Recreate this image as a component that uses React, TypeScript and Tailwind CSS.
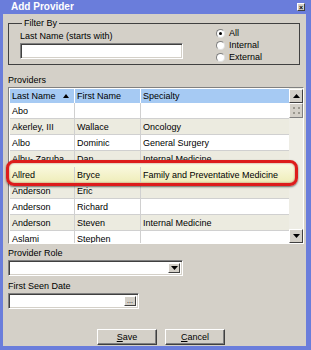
import React from "react";

type Row = { last: string; first: string; spec: string; hi?: boolean };

const rows: Row[] = [
  { last: "Abo", first: "", spec: "" },
  { last: "Akerley, III", first: "Wallace", spec: "Oncology" },
  { last: "Albo", first: "Dominic", spec: "General Surgery" },
  { last: "Albu- Zaruba", first: "Dan", spec: "Internal Medicine" },
  { last: "Allred", first: "Bryce", spec: "Family and Preventative Medicine", hi: true },
  { last: "Anderson", first: "Eric", spec: "" },
  { last: "Anderson", first: "Richard", spec: "" },
  { last: "Anderson", first: "Steven", spec: "Internal Medicine" },
  { last: "Aslami", first: "Stephen", spec: "" },
];

const Radio = ({ label, checked }: { label: string; checked?: boolean }) => (
  <div className="flex items-center h-[12px] gap-[4px]">
    <span className="w-[9px] h-[9px] rounded-full bg-white border border-t-[#808080] border-l-[#808080] border-b-[#e0e0e0] border-r-[#e0e0e0] flex items-center justify-center">
      {checked && <span className="w-[3px] h-[3px] rounded-full bg-black" />}
    </span>
    <span>{label}</span>
  </div>
);

const Sunken = ({ className, children }: { className: string; children?: React.ReactNode }) => (
  <div
    className={
      "bg-white border border-t-[#808080] border-l-[#808080] border-b-white border-r-white shadow-[inset_1px_1px_0_#404040,inset_-1px_-1px_0_#d4d0c8] flex justify-end items-stretch p-[2px] " +
      className
    }
  >
    {children}
  </div>
);

const SmallBtn = ({ children }: { children?: React.ReactNode }) => (
  <div className="w-[12px] bg-[#d4d0c8] border border-t-white border-l-white border-b-[#404040] border-r-[#404040] flex items-center justify-center">
    {children}
  </div>
);

const Button = ({ first, rest }: { first: string; rest: string }) => (
  <div className="w-[60px] h-[16px] bg-[#d4d0c8] border border-t-white border-l-white border-b-[#404040] border-r-[#404040] shadow-[inset_-1px_-1px_0_#808080] flex items-center justify-center">
    <span>
      <span className="underline">{first}</span>
      {rest}
    </span>
  </div>
);

export default function App() {
  return (
    <div className="w-[311px] h-[350px] bg-[#6a7ddb] flex flex-col pl-[3px] pr-[5px] pb-[4px] font-['Liberation_Sans',Arial,sans-serif] text-[9px] leading-[12px] text-black">
      {/* title bar */}
      <div className="h-[14px] flex items-center justify-between pl-[8px] pr-[1px] shrink-0">
        <span className="text-white font-bold text-[10px]">Add Provider</span>
        <span className="w-[8px] h-[8px] bg-[#d4d0c8] border border-t-white border-l-white border-b-[#404040] border-r-[#404040] flex items-center justify-center text-[7px] leading-none font-bold">
          ×
        </span>
      </div>

      <div className="flex-1 bg-[#d4d0c8] flex flex-col px-[5px] pt-[3px]">
        {/* Filter By */}
        <fieldset className="border border-[#404040] w-[292px] h-[48px] pl-[11px] pr-[10px] flex">
          <legend className="ml-[2px] px-[2px] leading-[13px]">Filter By</legend>
          <div className="flex w-full justify-between">
            <div className="flex flex-col">
              <span className="leading-[13px]">Last Name (starts with)</span>
              <Sunken className="w-[163px] h-[16px]" />
            </div>
            <div className="flex flex-col -mt-[3px] mr-[27px]">
              <Radio label="All" checked />
              <Radio label="Internal" />
              <Radio label="External" />
            </div>
          </div>
        </fieldset>

        <span className="mt-[9px] leading-[13px]">Providers</span>

        {/* grid */}
        <div className="relative w-[296px] h-[157px] border border-t-[#808080] border-l-[#808080] border-b-white border-r-white shadow-[inset_1px_1px_0_#404040] flex">
          <div className="flex-1 flex flex-col overflow-hidden pl-[1px] pt-[1px] bg-white">
            <div className="flex h-[14px] shrink-0 bg-[#a6caf3]">
              <div className="w-[65px] flex items-center justify-between pl-[2px] pr-[5px] border-r border-white">
                <span>Last Name</span>
                <svg width="6" height="4" viewBox="0 0 6 4">
                  <path d="M0 4 L3 0 L6 4 Z" fill="#000" />
                </svg>
              </div>
              <div className="w-[66px] flex items-center pl-[2px] border-r border-white">First Name</div>
              <div className="flex-1 flex items-center pl-[2px]">Specialty</div>
            </div>
            {rows.map((r, i) => (
              <div
                key={i}
                className={
                  "flex h-[16px] shrink-0 border-b border-[#d0d0d0] " +
                  (r.hi ? "relative z-10 bg-transparent border-transparent" : i % 2 ? "bg-[#ecebe0]" : "bg-white")
                }
              >
                <div className="w-[65px] flex items-center pl-[2px] border-r border-[#d0d0d0] whitespace-nowrap overflow-hidden">
                  {r.last}
                </div>
                <div className="w-[66px] flex items-center pl-[2px] border-r border-[#d0d0d0]">{r.first}</div>
                <div className="flex-1 flex items-center pl-[2px] whitespace-nowrap">{r.spec}</div>
              </div>
            ))}
          </div>

          {/* scrollbar */}
          <div className="w-[14px] flex flex-col bg-[#eeede5] pt-[1px]">
            <div className="h-[14px] bg-[#d4d0c8] border border-t-white border-l-white border-b-[#404040] border-r-[#404040] flex items-center justify-center">
              <svg width="7" height="4" viewBox="0 0 7 4">
                <path d="M0 4 L3.5 0 L7 4 Z" fill="#000" />
              </svg>
            </div>
            <div className="h-[15px] bg-[#d4d0c8] border border-t-white border-l-white border-b-[#808080] border-r-[#808080] flex items-center justify-center">
              <svg width="7" height="7" viewBox="0 0 7 7">
                <rect x="0" y="0" width="2" height="2" fill="#9a988f" />
                <rect x="5" y="0" width="2" height="2" fill="#9a988f" />
                <rect x="0" y="5" width="2" height="2" fill="#9a988f" />
                <rect x="5" y="5" width="2" height="2" fill="#9a988f" />
              </svg>
            </div>
            <div className="flex-1" />
            <div className="h-[14px] bg-[#d4d0c8] border border-t-white border-l-white border-b-[#404040] border-r-[#404040] flex items-center justify-center">
              <svg width="7" height="4" viewBox="0 0 7 4">
                <path d="M0 0 L3.5 4 L7 0 Z" fill="#000" />
              </svg>
            </div>
          </div>

          {/* red highlight callout */}
          <div className="absolute left-[-3px] top-[72px] w-[292px] h-[26px] rounded-[8px] border-[3px] border-[#dd1c1c] bg-[linear-gradient(#fbfae6,#efedb8)] shadow-[0_1px_2px_rgba(0,0,0,0.55),inset_0_0_2px_rgba(120,0,0,0.6)] pointer-events-none" />
        </div>

        <span className="mt-[3px] leading-[13px]">Provider Role</span>
        <Sunken className="w-[175px] h-[16px]">
          <SmallBtn>
            <svg width="7" height="4" viewBox="0 0 7 4">
              <path d="M0 0 L3.5 4 L7 0 Z" fill="#000" />
            </svg>
          </SmallBtn>
        </Sunken>

        <span className="mt-[4px] leading-[13px]">First Seen Date</span>
        <Sunken className="w-[131px] h-[16px]">
          <SmallBtn>
            <span className="text-[7px] leading-none -mt-[2px]">...</span>
          </SmallBtn>
        </Sunken>

        <div className="mt-[20px] flex gap-[8px] pl-[89px]">
          <Button first="S" rest="ave" />
          <Button first="C" rest="ancel" />
        </div>
      </div>
    </div>
  );
}
